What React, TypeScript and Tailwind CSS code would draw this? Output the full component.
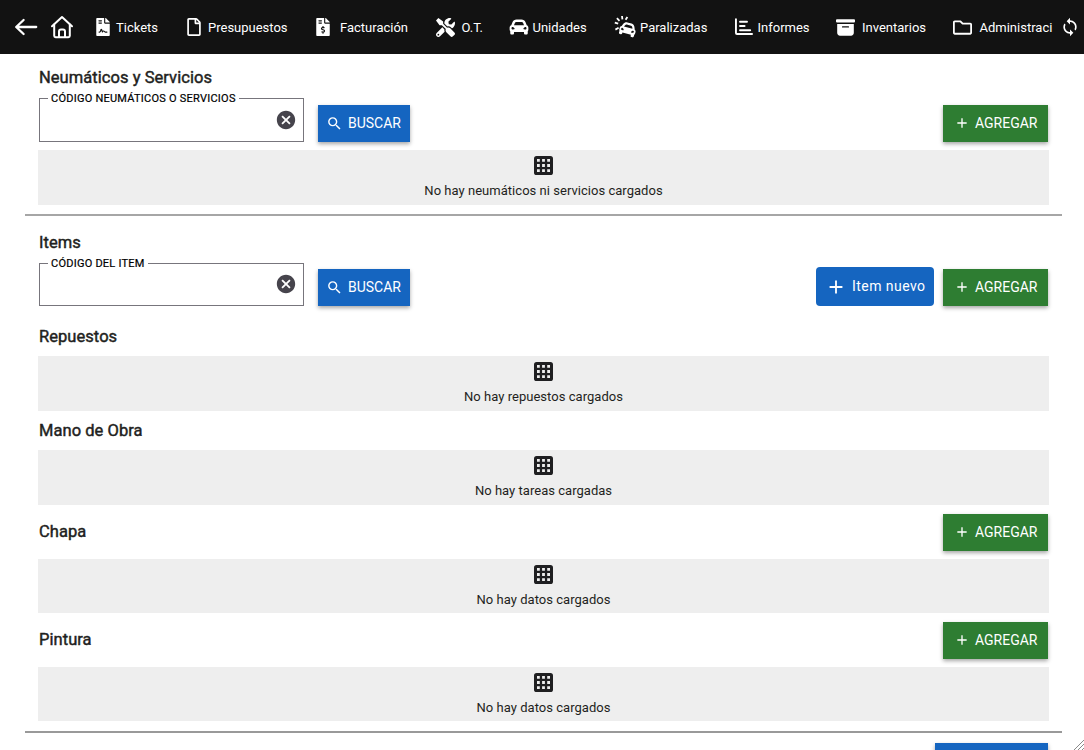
import type { ReactNode } from "react";
import { BsArchiveFill } from "react-icons/bs";
import {
  FaCarAlt,
  FaFileContract,
  FaFileInvoiceDollar,
  FaRegFile,
  FaRegFolder,
  FaTools,
} from "react-icons/fa";
import { MdAdd, MdCancel, MdSearch, MdSync } from "react-icons/md";

function ArrowIcon() {
  return (
    <svg className="h-[22px] w-[24px]" viewBox="0 0 24 22" fill="none" stroke="currentColor" strokeWidth={2.3} strokeLinecap="round" strokeLinejoin="round">
      <path d="M9.6 4L2.2 11l7.4 7M2.7 11h19.5" />
    </svg>
  );
}

function HomeIcon() {
  return (
    <svg className="h-[24px] w-[24px]" viewBox="0 0 24 24" fill="none" stroke="currentColor" strokeWidth={2} strokeLinecap="round" strokeLinejoin="round">
      <path d="M2 11.2L12 2l10 9.2" />
      <path d="M4.2 9.6v11.2a1.4 1.4 0 0 0 1.4 1.4h12.8a1.4 1.4 0 0 0 1.4-1.4V9.6" />
      <path d="M9 22v-5.6a2 2 0 0 1 2-2h2a2 2 0 0 1 2 2V22" />
    </svg>
  );
}

function CrashIcon() {
  return (
    <svg className="h-[24px] w-[24px]" viewBox="0 0 24 24" fill="none" stroke="currentColor" strokeWidth={1.8}>
      <path d="M.8 7.6l3.4 1.1M2.9 3.2l2.6 2.6M8 1l.4 3.4M13.4 2l-1.8 2.8M1.4 14.6l3.2-1.8" />
      <g transform="translate(7.6 3.6) rotate(15)">
        <FaCarAlt size={17.5} stroke="none" />
      </g>
    </svg>
  );
}

function ReportIcon() {
  return (
    <svg className="h-[18px] w-[18px]" viewBox="0 0 18 18" fill="none" stroke="currentColor" strokeWidth={1.9} strokeLinecap="round">
      <path d="M.95 1.2V15a1 1 0 0 0 1 1h15.1M5 3.7h7M5 8h4.6M5 12.3h10.2" />
    </svg>
  );
}

function GridIcon() {
  return (
    <svg className="h-[19px] w-[19px]" viewBox="0 0 19 19">
      <rect width="19" height="19" rx="2.6" fill="#1f1f21" />
      <path d="M3 4.4h13M3 9.5h13M3 14.6h13" stroke="#eee" strokeWidth="2.8" strokeDasharray="2.8 2.3" />
    </svg>
  );
}

type NavItem = { label: string; icon: ReactNode; item: string; slot: string };

const navItems: NavItem[] = [
  { label: "Tickets", icon: <FaFileContract size={18} />, item: "w-[91px]", slot: "w-[22px]" },
  { label: "Presupuestos", icon: <FaRegFile size={18} />, item: "w-[129px]", slot: "w-[23px]" },
  { label: "Facturación", icon: <FaFileInvoiceDollar size={18} />, item: "w-[122px]", slot: "w-[26px]" },
  { label: "O.T.", icon: <FaTools size={19} />, item: "w-[73px]", slot: "w-[25.5px]" },
  { label: "Unidades", icon: <FaCarAlt size={20} />, item: "w-[105px]", slot: "w-[23.5px]" },
  { label: "Paralizadas", icon: <CrashIcon />, item: "w-[121px]", slot: "w-[26px]" },
  { label: "Informes", icon: <ReportIcon />, item: "w-[101px]", slot: "w-[22.5px]" },
  { label: "Inventarios", icon: <BsArchiveFill size={19} />, item: "w-[117px]", slot: "w-[26px]" },
  { label: "Administraci", icon: <FaRegFolder size={19} />, item: "w-[101px]", slot: "w-[26.5px]" },
];

function NavBar() {
  return (
    <header className="flex h-[54px] items-center bg-[#121212] text-white">
      <div className="flex w-[94px] shrink-0 items-center pl-[14px]">
        <ArrowIcon />
        <span className="ml-[12px]">
          <HomeIcon />
        </span>
      </div>
      {navItems.map(({ label, icon, item, slot }) => (
        <div key={label} className={`flex h-[24px] shrink-0 items-center ${item}`}>
          <span className={`shrink-0 ${slot}`}>{icon}</span>
          <span className="pt-px text-[13px] whitespace-nowrap">{label}</span>
        </div>
      ))}
      <MdSync size={20} className="ml-[6px] shrink-0" />
    </header>
  );
}

function Title({ children }: { children: ReactNode }) {
  return (
    <h2 className="text-[16.5px] leading-[22px] tracking-[0.05px] text-[#1f1f21] [-webkit-text-stroke:0.45px_#1f1f21]">
      {children}
    </h2>
  );
}

function AddButton() {
  return (
    <button className="flex h-[37px] w-[105px] items-center bg-[#2e7d32] pl-[11px] text-[14px] text-white shadow-[0_2px_4px_rgba(0,0,0,0.35)]">
      <MdAdd size={16} className="mr-[5px] mb-px" />
      AGREGAR
    </button>
  );
}

function EmptyPanel({ text, height = "h-[55px]" }: { text: string; height?: string }) {
  return (
    <div className={`flex flex-col items-center bg-[#eee] pt-[6px] ${height}`}>
      <GridIcon />
      <p className="mt-[8px] text-[13px] leading-[16px] tracking-[0.03px] text-[#1f1f21]">{text}</p>
    </div>
  );
}

type SearchRowProps = { label: string; height: string; children: ReactNode };

function SearchRow({ label, height, children }: SearchRowProps) {
  return (
    <div className="flex h-[50px] items-end">
      <fieldset className={`ml-px flex w-[265px] items-center justify-end border border-[#77757c] pr-[6px] ${height}`}>
        <legend className="ml-[8px] px-[3px] text-[11px] leading-[13px] tracking-[0.24px] text-black [-webkit-text-stroke:0.2px_#000]">
          {label}
        </legend>
        <MdCancel size={22} className="mb-[7px] text-[#46444c]" />
      </fieldset>
      <button className="ml-[14px] flex h-[37px] w-[92px] items-center bg-[#1565c0] pl-[8px] text-[14px] text-white shadow-[0_2px_4px_rgba(0,0,0,0.35)]">
        <MdSearch size={17} className="mr-[5px] mb-px" />
        BUSCAR
      </button>
      <div className="mr-px ml-auto flex items-end gap-[9px]">{children}</div>
    </div>
  );
}

export default function App() {
  return (
    <div className="relative h-[750px] overflow-hidden bg-white font-['Roboto',sans-serif]">
      <NavBar />

      {/* Neumáticos y Servicios */}
      <section className="mr-[22px] ml-[25px] h-[162px] border-b-2 border-[#a6a6a6] pt-[13px] pr-[13px] pl-[13px]">
        <div className="mb-[3px] pl-px">
          <Title>Neumáticos y Servicios</Title>
        </div>
        <div className="mb-[8px]">
          <SearchRow label="CÓDIGO NEUMÁTICOS O SERVICIOS" height="h-[50px]">
            <AddButton />
          </SearchRow>
        </div>
        <EmptyPanel text="No hay neumáticos ni servicios cargados" />
      </section>

      {/* Items */}
      <section className="mr-[22px] ml-[25px] h-[517px] border-b-2 border-[#999] pt-[16px] pr-[13px] pl-[13px]">
        <div className="mb-[2px] pl-px">
          <Title>Items</Title>
        </div>
        <SearchRow label="CÓDIGO DEL ITEM" height="h-[49px]">
          <button className="flex h-[39px] w-[118px] items-center rounded-[4px] bg-[#1565c0] pl-[9px] text-[14px] tracking-[0.45px] text-white">
            <MdAdd size={22} className="mr-[5px]" />
            Item nuevo
          </button>
          <AddButton />
        </SearchRow>
        <div className="mt-[20px] mb-[8px] pl-px">
          <Title>Repuestos</Title>
        </div>
        <EmptyPanel text="No hay repuestos cargados" />
        <div className="mt-[9px] mb-[8px] pl-px">
          <Title>Mano de Obra</Title>
        </div>
        <EmptyPanel text="No hay tareas cargadas" />
        <div className="flex h-[54px] items-center justify-between pr-px pl-px">
          <Title>Chapa</Title>
          <AddButton />
        </div>
        <EmptyPanel text="No hay datos cargados" height="h-[54px]" />
        <div className="flex h-[54px] items-center justify-between pr-px pl-px">
          <Title>Pintura</Title>
          <AddButton />
        </div>
        <EmptyPanel text="No hay datos cargados" height="h-[54px]" />
      </section>

      <div className="mt-[10px] mr-[36px] ml-auto h-[37px] w-[113px] bg-[#1565c0] shadow-[0_2px_4px_rgba(0,0,0,0.35)]" />

      {/* Resize grip */}
      <svg className="absolute right-0 bottom-0 h-[10px] w-[10px]" viewBox="0 0 10 10" stroke="#8a8a8a" strokeWidth={1}>
        <path d="M0 10L10 0M4 10l6-6M8 10l2-2" />
      </svg>
    </div>
  );
}
